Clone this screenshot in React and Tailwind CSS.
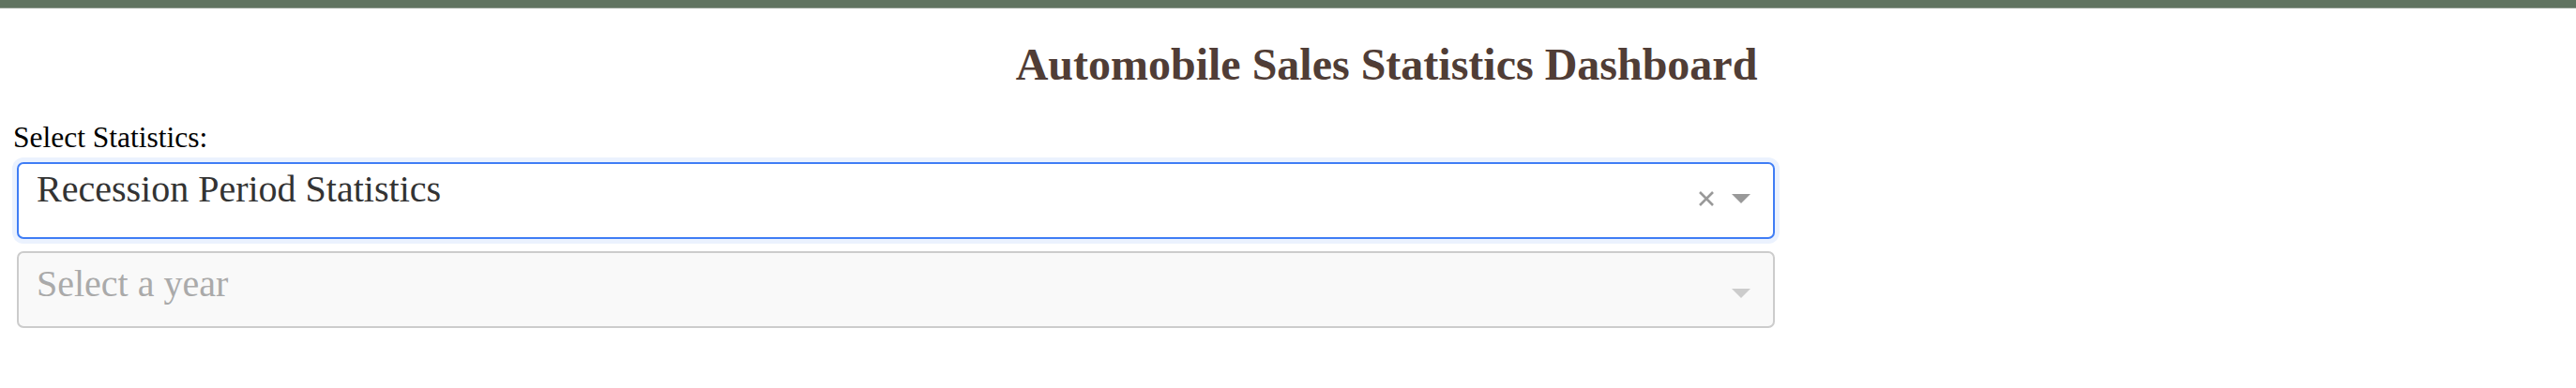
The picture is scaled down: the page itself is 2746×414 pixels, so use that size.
import React from "react";

// ─── DROPDOWN ICONS ─────────────────────────────
const ClearIcon = () => (
  <svg width="18" height="18" viewBox="0 0 18 18" className="block">
    <path d="M2 2 L16 16 M16 2 L2 16" stroke="#999999" strokeWidth="2.6" strokeLinecap="butt" />
  </svg>
);

const Caret = ({ color }) => (
  <svg width="20" height="10" viewBox="0 0 20 10" className="block">
    <path d="M0 0 L20 0 L10 10 Z" fill={color} />
  </svg>
);

export default function App() {
  return (
    <div className="min-h-[414px] bg-white" style={{ fontFamily: '"Liberation Serif", "Times New Roman", serif' }}>
      {/* TOP BAR */}
      <div className="h-[9px] bg-[#617461] border-b border-[#8e9a8e]"></div>

      {/* HEADER */}
      <div className="pt-[32px] pl-[210px] text-center">
        <h1 className="text-[48px] leading-[56px] font-bold text-[#503D36]">
          Automobile Sales Statistics Dashboard
        </h1>
      </div>

      <div className="pl-[14px] pt-[32px]">
        <label className="block text-[31.5px] leading-[36px] text-black">Select Statistics:</label>
      </div>

      {/* DROPDOWNS */}
      <div className="ml-[18px] w-[1874px] mt-[8px] flex flex-col gap-[13px]">
        <div className="h-[82px] rounded-[7px] border-2 border-[#3f7df5] bg-white shadow-[0_0_0_5px_#ebf2fe] flex items-start">
          <div className="flex-1 pl-[19px] pt-[7px] text-[40px] leading-[40px] text-[#333333]">
            Recession Period Statistics
          </div>
          <div className="flex items-center gap-[18px] pr-[24px] pt-[28px]">
            <ClearIcon />
            <Caret color="#999999" />
          </div>
        </div>

        <div className="h-[82px] rounded-[7px] border-2 border-[#cccccc] bg-[#f9f9f9] flex items-start">
          <div className="flex-1 pl-[19px] pt-[13px] text-[40px] leading-[40px] text-[#aaaaaa]">
            Select a year
          </div>
          <div className="pr-[24px] pt-[38px]">
            <Caret color="#cccccc" />
          </div>
        </div>
      </div>
    </div>
  );
}
